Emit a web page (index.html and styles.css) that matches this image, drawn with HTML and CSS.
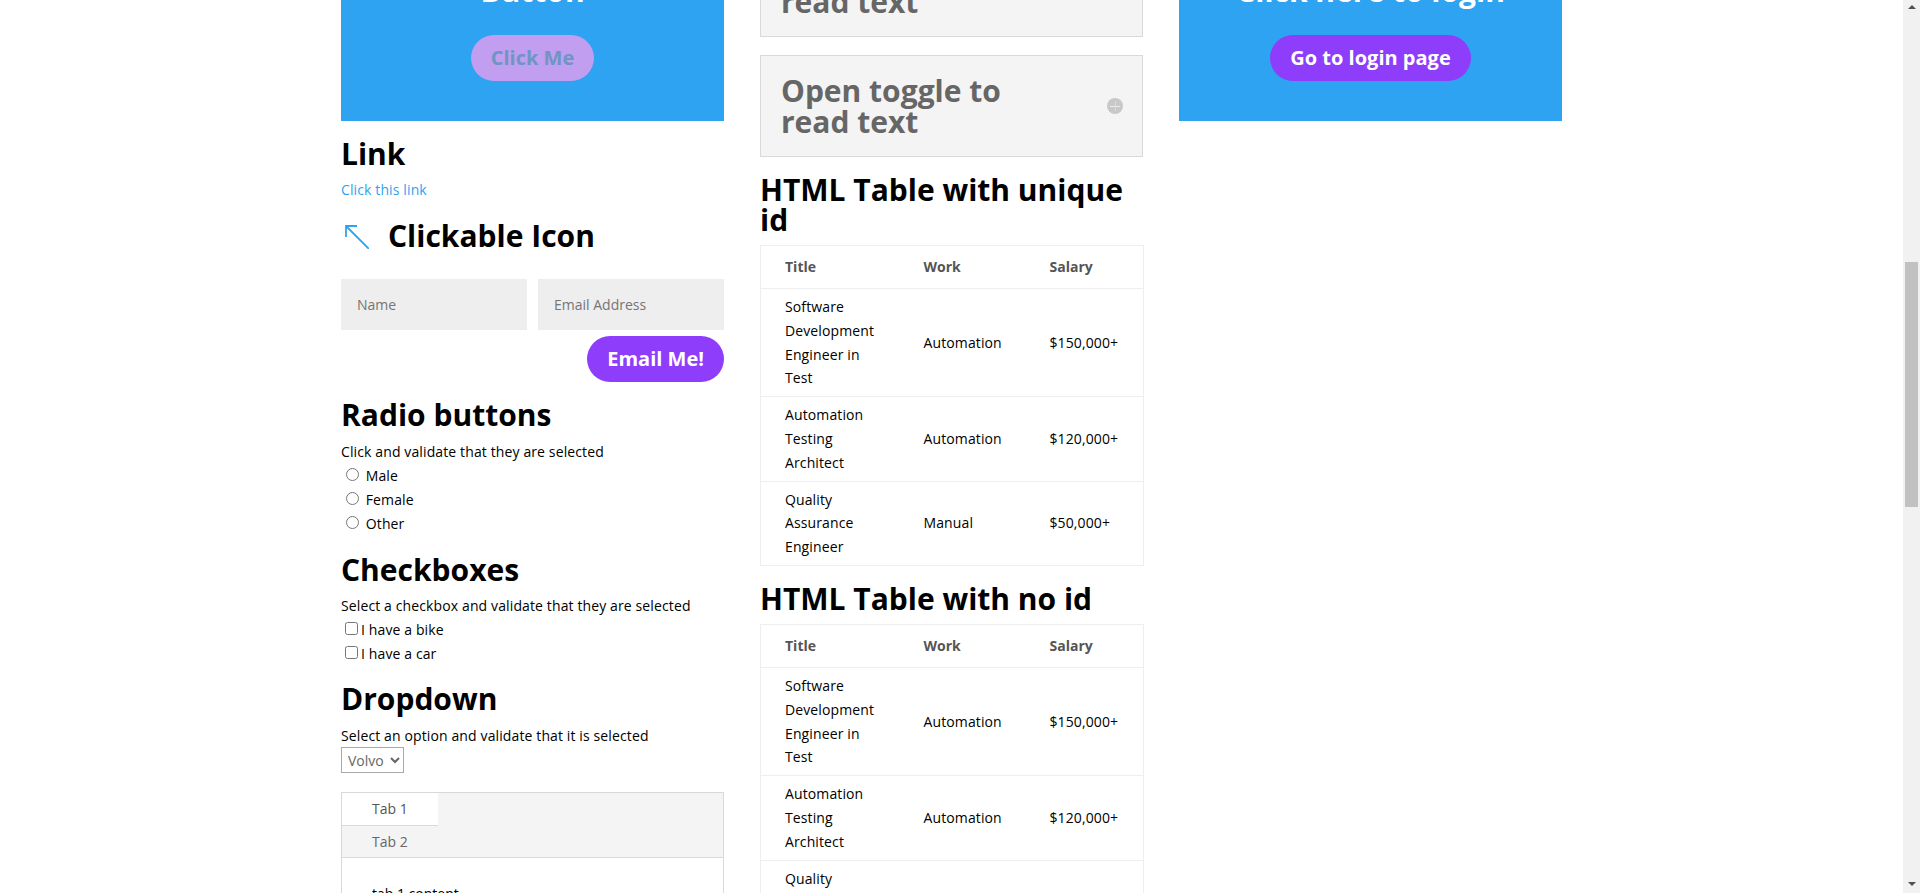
FILE: index.html
```html
<!DOCTYPE html>
<html lang="en">
<head>
<meta charset="utf-8">
<title>Practice page</title>
<link rel="stylesheet" href="styles.css">
</head>
<body>
<div class="viewport">
  <main class="columns">
    <section class="col">
      <div class="cta">
        <h2 class="cta-title">Button</h2>
        <a class="btn btn-disabled">Click Me</a>
      </div>
      <h2 class="head head-link">Link</h2>
      <a class="text-link">Click this link</a>
      <div class="icon-row">
        <svg class="arrow" viewBox="0 0 24 24" width="24" height="24"><path d="M1 12V1H12M1 1L24 24" fill="none" stroke="#2ea3f2" stroke-width="1.8"/></svg>
        <h2 class="head">Clickable Icon</h2>
      </div>
      <form class="contact">
        <div class="fields">
          <input class="field" type="text" placeholder="Name">
          <input class="field" type="text" placeholder="Email Address">
        </div>
        <div class="form-end"><a class="btn">Email Me!</a></div>
      </form>
      <h2 class="head head-radio">Radio buttons</h2>
      <p class="copy copy-radio">Click and validate that they are selected</p>
      <label class="opt"><input class="radio" type="radio" name="g"> Male</label>
      <label class="opt"><input class="radio" type="radio" name="g"> Female</label>
      <label class="opt"><input class="radio" type="radio" name="g"> Other</label>
      <h2 class="head head-check">Checkboxes</h2>
      <p class="copy copy-check">Select a checkbox and validate that they are selected</p>
      <label class="opt opt-check"><input class="check" type="checkbox">I have a bike</label>
      <label class="opt opt-check"><input class="check" type="checkbox">I have a car</label>
      <h2 class="head head-drop">Dropdown</h2>
      <p class="copy copy-drop">Select an option and validate that it is selected</p>
      <select class="dropdown"><option>Volvo</option></select>
      <div class="tabs">
        <div class="tab-nav">
          <div class="tab tab-active">Tab 1</div>
          <div class="tab tab-rest">Tab 2</div>
        </div>
        <div class="tab-body">tab 1 content</div>
      </div>
    </section>
    <section class="col">
      <div class="toggle toggle-first"><h5 class="toggle-title">Open toggle to read text</h5><span class="toggle-icon"></span></div>
      <div class="toggle"><h5 class="toggle-title">Open toggle to read text</h5><span class="toggle-icon"></span></div>
      <h2 class="head head-table">HTML Table with unique id</h2>
      <table class="data">
        <thead><tr><th class="c1">Title</th><th class="c2">Work</th><th class="c3">Salary</th></tr></thead>
        <tbody>
          <tr><td>Software Development Engineer in Test</td><td>Automation</td><td>$150,000+</td></tr>
          <tr><td>Automation Testing Architect</td><td>Automation</td><td>$120,000+</td></tr>
          <tr><td>Quality Assurance Engineer</td><td>Manual</td><td>$50,000+</td></tr>
        </tbody>
      </table>
      <h2 class="head head-table">HTML Table with no id</h2>
      <table class="data">
        <thead><tr><th class="c1">Title</th><th class="c2">Work</th><th class="c3">Salary</th></tr></thead>
        <tbody>
          <tr><td>Software Development Engineer in Test</td><td>Automation</td><td>$150,000+</td></tr>
          <tr><td>Automation Testing Architect</td><td>Automation</td><td>$120,000+</td></tr>
          <tr><td>Quality Assurance Engineer</td><td>Manual</td><td>$50,000+</td></tr>
        </tbody>
      </table>
    </section>
    <section class="col">
      <div class="cta">
        <h2 class="cta-title">Click here to login</h2>
        <a class="btn">Go to login page</a>
      </div>
    </section>
  </main>
  <div class="scrollbar">
    <span class="sb-up"></span>
    <div class="sb-track"><div class="sb-thumb"></div></div>
    <span class="sb-down"></span>
  </div>
</div>
</body>
</html>
```
FILE: styles.css
```css
* { box-sizing: border-box; }
html, body { margin: 0; height: 100%; overflow: hidden; }
body { font-family: "Open Sans", sans-serif; font-size: 14px; line-height: 23.8px; color: #000; background: #fff; }
.viewport { display: flex; height: 893px; overflow: hidden; }
.columns { flex: 1; display: grid; grid-template-columns: 383px 383px 383px; column-gap: 36px; justify-content: center; height: 893px; overflow: hidden; }
.col { min-width: 0; display: flex; flex-direction: column; align-items: stretch; height: 893px; }
.col > * { flex: none; }
.cta { height: 161px; margin-top: -40px; background: #2ea3f2; color: #fff; text-align: center; padding-top: 16px; }
.cta-title { margin: 0; font-size: 30px; line-height: 30px; font-weight: 700; color: #fff; }
.btn { display: inline-block; height: 46px; line-height: 46px; padding: 0 20px; border-radius: 23px; background: #8e3dfb; color: #fff; font-size: 20px; font-weight: 700; }
.cta .btn { margin-top: 29px; }
.btn-disabled { background: #c19eef; color: #6e95c4; }
.head { margin: 0; font-size: 30px; line-height: 30px; font-weight: 700; color: #000; }
.head-link { margin-top: 18px; }
.text-link { color: #2ea3f2; margin-top: 9px; letter-spacing: .12px; }
.icon-row { display: flex; align-items: center; gap: 19px; margin: 19px 0 0 4px; height: 30px; }
.arrow { flex: none; margin-top: 2px; }
.contact { margin-top: 28px; }
.fields { display: flex; gap: 11px; }
.field { flex: 1; min-width: 0; height: 51px; border: 0; background: #eee; padding: 0 16px; font: 14px "Open Sans", sans-serif; color: #666; }
.field::placeholder { color: #757575; opacity: 1; }
.form-end { display: flex; justify-content: flex-end; margin-top: 6px; }
.head-radio { margin-top: 18px; }
.copy { margin: 9px 0 0; letter-spacing: .12px; }
.copy-radio, .copy-drop { margin-top: 10px; }
.copy-check { margin-bottom: 1px; }
.opt { display: block; height: 24px; line-height: 24px; margin-left: 5px; white-space: nowrap; letter-spacing: .12px; }
.opt-check { margin-left: 4px; }
.radio { margin: 0 3px 0 0; width: 13px; height: 13px; vertical-align: 0; }
.check { margin: 0 3px 0 0; width: 13px; height: 13px; vertical-align: 0; }
.head-check { margin-top: 19px; }
.head-drop { margin-top: 18px; }
.dropdown { align-self: flex-start; width: 63px; height: 26px; margin-top: -1px; border: 1px solid #a9a9a9; background: #fff; color: #666; font: 14px "Open Sans", sans-serif; padding: 0 0 0 2px; }
.tabs { margin-top: 19px; border: 1px solid #d9d9d9; background: #fff; }
.tab-nav { background: #f4f4f4; border-bottom: 1px solid #d9d9d9; }
.tab { height: 33px; line-height: 32px; padding-left: 30px; color: #666; }
.tab-active { width: 96px; background: #fff; color: #555; border-bottom: 1px solid #d9d9d9; }
.tab-rest { height: 31px; line-height: 32px; }
.tab-body { padding: 24px 30px; }
.toggle { display: flex; align-items: center; justify-content: space-between; border: 1px solid #d9d9d9; background: #f4f4f4; height: 102px; padding: 0 20px; margin-top: 18px; }
.col > .toggle-first { margin-top: -65px; }
.toggle-title { margin: 0; width: 240px; padding-top: 1px; font-size: 30px; line-height: 30.6px; font-weight: 700; color: #666; }
.toggle-icon { position: relative; width: 16px; height: 16px; border-radius: 50%; background: #c8c8c8; flex: none; margin-right: -1px; }
.toggle-icon::before { content: ""; position: absolute; left: 3px; right: 3px; top: 7.5px; height: 1px; background: #ececec; }
.toggle-icon::after { content: ""; position: absolute; top: 3px; bottom: 3px; left: 7.5px; width: 1px; background: #dcdcdc; }
.head-table { margin-top: 18px; }
.data { width: 383px; table-layout: fixed; border-collapse: collapse; border: 1px solid #eee; margin-top: 10.2px; }
.data th, .data td { text-align: left; padding: 6px 6px 6px 24px; border-top: 1px solid #eee; font-weight: 400; letter-spacing: .12px; }
.data td:first-child { padding-right: 24px; }
.data th { padding-top: 9px; padding-bottom: 9px; font-weight: 700; color: #555; letter-spacing: 0; }
.c1 { width: 139px; }
.c2 { width: 126px; }
.c3 { width: 118px; }
.scrollbar { width: 17px; flex: none; background: #f1f1f1; display: flex; flex-direction: column; height: 893px; }
.sb-up, .sb-down { flex: none; height: 17px; position: relative; }
.sb-up::before { content: ""; position: absolute; left: 5px; top: 5px; border: 4px solid transparent; border-top: 0; border-bottom: 4px solid #505050; }
.sb-down::before { content: ""; position: absolute; left: 5px; top: 6px; border: 4px solid transparent; border-bottom: 0; border-top: 4px solid #505050; }
.sb-track { flex: 1; padding-top: 245px; }
.sb-thumb { height: 245px; margin: 0 2px; background: #c1c1c1; }
```
